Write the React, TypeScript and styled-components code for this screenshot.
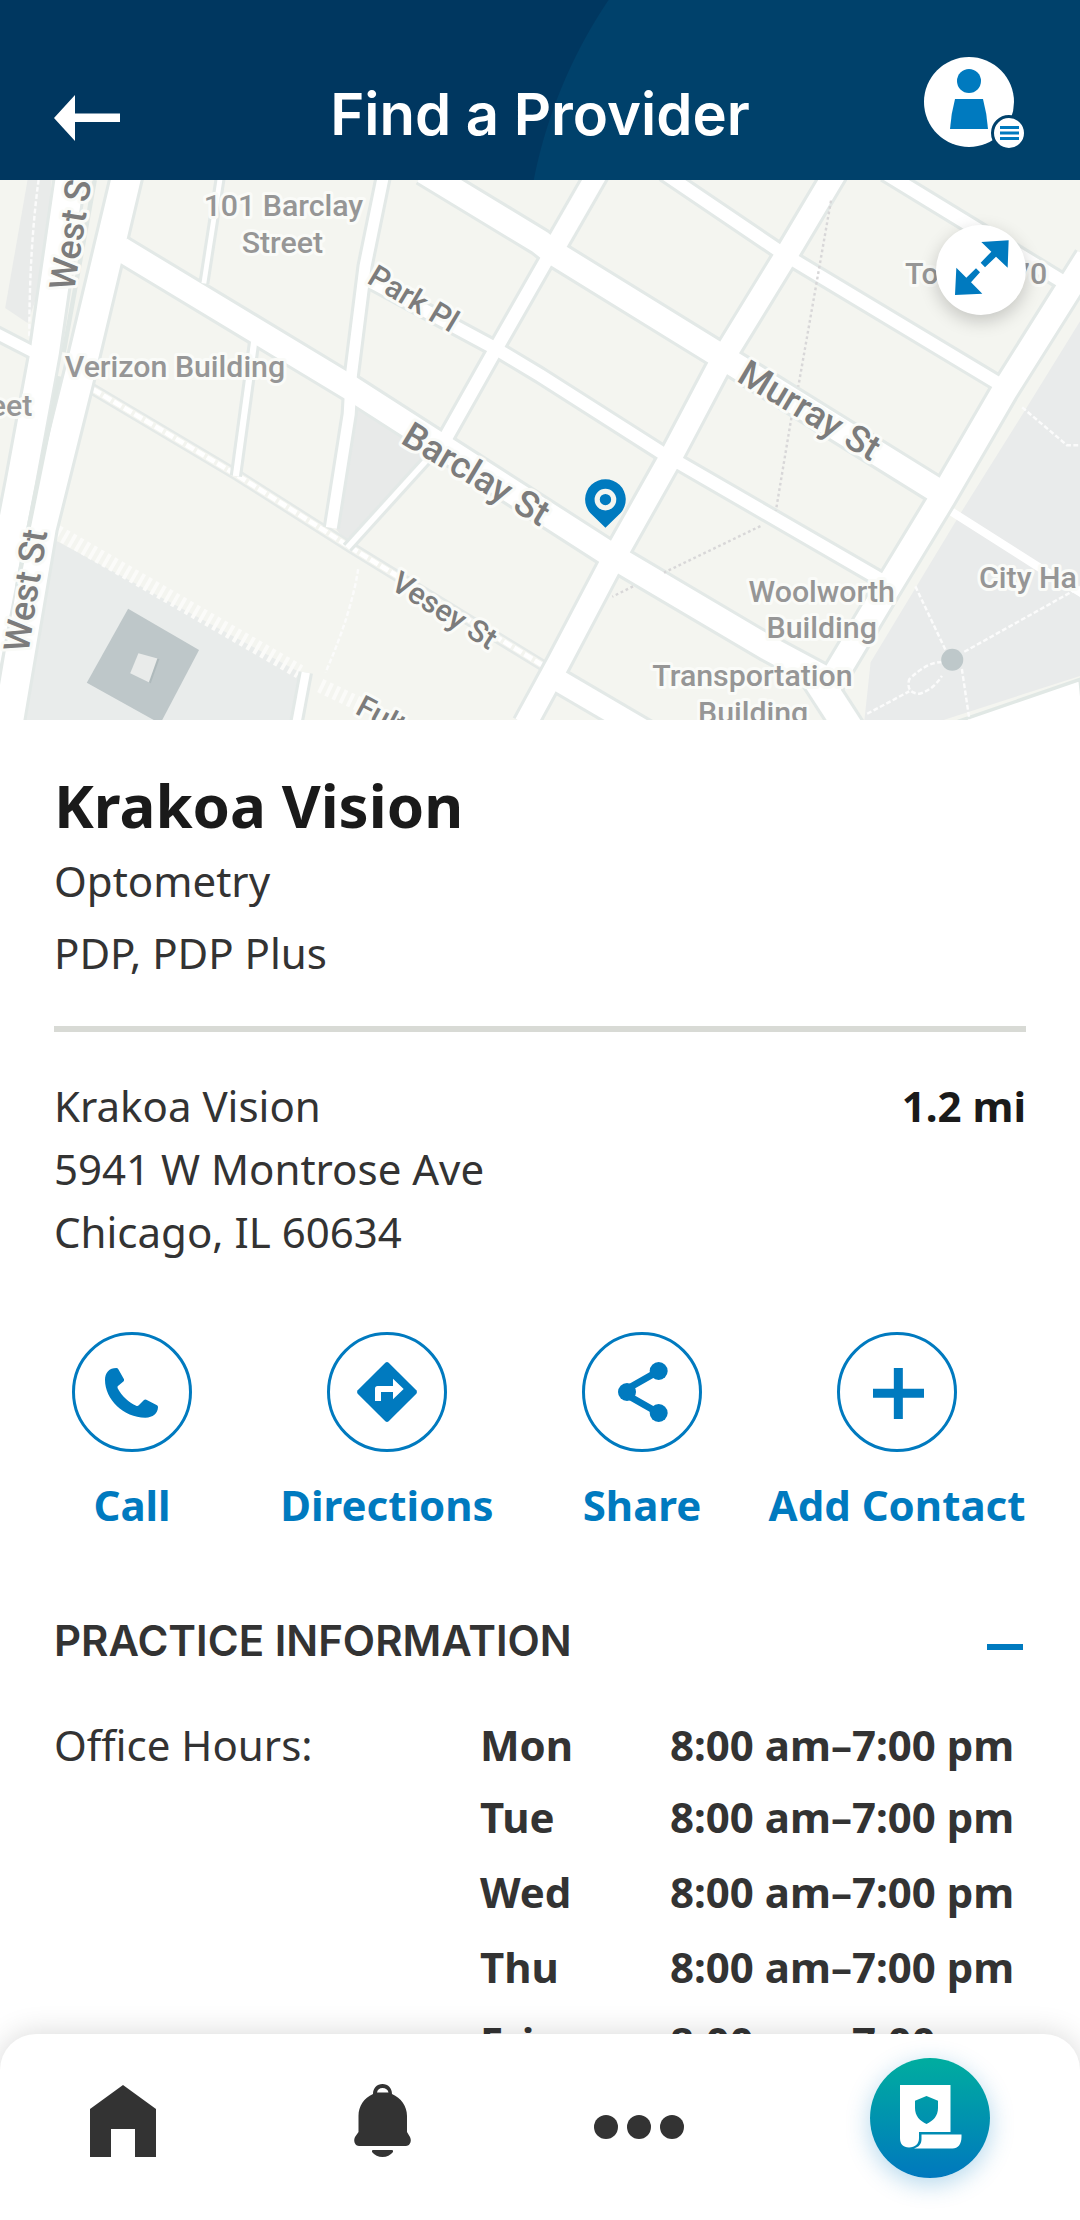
import React, { useState } from "react";
import styled, { createGlobalStyle, css } from "styled-components";

const blue = "#007abf";
const ink = "#333333";
const body = `"Noto Sans", "Open Sans", sans-serif`;
const display = `Inter, "Noto Sans", sans-serif`;

const GlobalStyle = createGlobalStyle`
  *, *::before, *::after { box-sizing: border-box; }
  body { margin: 0; background: #ffffff; color: ${ink}; font-family: ${body}; }
  button { margin: 0; padding: 0; border: 0; background: none; color: inherit; font: inherit; cursor: pointer; }
  svg { display: block; }
`;

const Screen = styled.div`
  display: flex;
  flex-direction: column;
  height: 100vh;
  overflow: hidden;
`;

const Header = styled.header`
  display: grid;
  grid-template-columns: 102px 1fr 102px;
  align-items: end;
  flex: none;
  height: 180px;
  padding: 0 54px 28px;
  color: #ffffff;
  background: radial-gradient(circle at 1016px 275px, #00416b 491px, #003760 492px);
`;

const BackButton = styled.button`
  justify-self: start;
  padding: 11px 0;
`;

const ScreenTitle = styled.h1`
  margin: 0;
  text-align: center;
  white-space: nowrap;
  font: 600 58px/76px ${display};
`;

const AccountButton = styled.button`
  justify-self: end;
`;

const Main = styled.main`
  flex: 1;
  min-height: 0;
  overflow-y: auto;
  scrollbar-width: none;
`;

const MapPanel = styled.section`
  position: relative;
  height: 540px;
  background: #f4f5f0;

  > svg { width: 100%; height: 100%; }
`;

const ExpandButton = styled.button`
  position: absolute;
  top: 45px;
  right: 54px;
  width: 90px;
  height: 90px;
  border-radius: 50%;
  background: #ffffff;
  box-shadow: 0 6px 18px rgba(0, 0, 0, 0.2);
`;

const Summary = styled.section`
  margin: 0 54px;
  padding: 45px 0 37px;
  border-bottom: 6px solid #d8dad5;
`;

const ProviderName = styled.h2`
  margin: 0;
  color: #1a1a1a;
  font-size: 60px;
  font-weight: 700;
  line-height: 80px;
`;

const Detail = styled.p`
  margin: 0;
  font-size: 42px;
  line-height: 72px;
`;

const Location = styled.section`
  display: flex;
  justify-content: space-between;
  align-items: flex-start;
  padding: 42px 54px 69px;
  font-size: 42px;
  line-height: 63px;
`;

const Address = styled.address`
  font-style: normal;
`;

const Distance = styled.strong`
  color: #1a1a1a;
  font-weight: 700;
`;

const Actions = styled.section`
  display: grid;
  grid-template-columns: repeat(4, minmax(0, 1fr));
  column-gap: 1px;
  padding: 0 56px 0 5px;
`;

const Action = styled.button`
  display: flex;
  flex-direction: column;
  align-items: center;
  gap: 21px;
  color: ${blue};
  font-size: 42px;
  font-weight: 700;
  line-height: 63px;
  white-space: nowrap;
`;

const ActionRing = styled.span`
  width: 120px;
  height: 120px;
  border: 3px solid ${blue};
  border-radius: 50%;
`;

const Practice = styled.section`
  padding: 75px 54px 0;
`;

const PracticeHead = styled.div`
  display: flex;
  justify-content: space-between;
  align-items: flex-end;
  margin-bottom: 39px;
`;

const PracticeTitle = styled.h3`
  margin: 0;
  font: 600 42px/60px ${display};
`;

const Toggle = styled.button`
  display: flex;
  align-items: center;
  justify-content: center;
  width: 42px;
  height: 48px;
`;

const Dash = styled.span`
  width: 36px;
  height: 6px;
  background: ${blue};
`;

const Hours = styled.div`
  display: grid;
  grid-template-columns: 426fr 546fr;
  font-size: 42px;
  line-height: 69px;
`;

const HoursLabel = styled.div``;

const HoursTable = styled.table`
  width: 100%;
  table-layout: fixed;
  border-collapse: collapse;
  font-weight: 700;

  th, td { padding: 0; text-align: left; white-space: nowrap; line-height: 75px; }
  th { width: 190px; }
  tr:first-child > * { line-height: 69px; }
`;

const TabBar = styled.nav`
  display: flex;
  justify-content: space-between;
  align-items: center;
  position: relative;
  flex: none;
  height: 186px;
  padding: 0 87px 12px 75px;
  border-radius: 36px 36px 0 0;
  background: #ffffff;
  box-shadow: 0 0 30px rgba(0, 0, 0, 0.16);
`;

const Tab = styled.button<{ $width: number; $raised?: boolean }>`
  display: flex;
  justify-content: center;
  width: ${(p) => p.$width}px;
  color: ${ink};
  ${(p) =>
    p.$raised &&
    css`
      margin-bottom: 6px;
    `}
`;

const CardDisc = styled.span`
  width: 120px;
  height: 120px;
  border-radius: 50%;
  background: linear-gradient(#00ad9f, #0078be);
  box-shadow: 0 6px 24px rgba(0, 122, 191, 0.3);
`;

type Street = { d: string; w: number };

const streets: Street[] = [
  { d: "M-20 440L100 502", w: 48 },
  { d: "M640 -10L592 300", w: 32 },
  { d: "M738 470L685 860", w: 36 },
  { d: "M1113 -10L1060 250L1020 570L1014 680L962 1010", w: 50 },
  { d: "M1260 790L1008 1068", w: 34 },
  { d: "M1050 280L1440 490L1568 567L1918 790L2600 1185", w: 54 },
  { d: "M1600 210L1440 490L1285 765", w: 56 },
  { d: "M1735 -20L1600 215", w: 76 },
  { d: "M1928 -20L2283 220L2918 602", w: 54 },
  { d: "M2570 -20L3110 310", w: 56 },
  { d: "M888 1430L860 1580", w: 42 },
  { d: "M1590 1435L1880 1605", w: 80 },
  { d: "M1230 -25L1568 180L1608 212L2083 505L2738 912", w: 88 },
  { d: "M350 200L1020 605L1788 1098L2228 1358L2400 1450", w: 88 },
  { d: "M2425 -20L2288 210L2098 520L1953 795L1773 1115L1623 1400L1525 1580", w: 82 },
  { d: "M3160 225L2918 610L2738 920L2568 1200L2400 1480", w: 90 },
  { d: "M2360 1430L2470 1600", w: 100 },
  { d: "M205 -20L130 500L60 880L-60 1500", w: 100 },
  { d: "M370 -20L232 560L120 1010L20 1600", w: 102 },
];

const footpaths = [
  "M2413 60L2318 600",
  "M2298 690L2253 960",
  "M2208 1005L1928 1140",
  "M1838 1180L1778 1210",
];

const parkPaths = [
  "M2968 660L3098 770H3140",
  "M2658 1180L2748 1370",
  "M2800 1370L3140 1180",
  "M2793 1420L2815 1568",
  "M2735 1400Q2690 1400 2640 1450Q2630 1490 2670 1492Q2710 1480 2735 1440",
  "M2518 1550L2640 1485",
  "M1040 1130Q1020 1260 945 1430",
  "M112 0Q85 200 85 460",
];

const MapPicture = () => (
  <svg viewBox="0 0 3136 1568" preserveAspectRatio="xMidYMid slice" role="img" aria-label="Map around the practice">
    <rect width="3136" height="1568" fill="#f4f5f0" />
    <path d="M80 0H150L130 270L80 415L15 372Z" fill="#e9ebea" />
    <path d="M150 1040L890 1440L850 1568H50Z" fill="#e9eceb" />
    <path d="M1036 665L1260 790L1016 1062L965 1000Z" fill="#e8eae9" />
    <path d="M3136 410L2988 650L2800 950L2528 1400L2510 1568H2740L3136 1440Z" fill="#e9ebeb" />
    <path d="M3136 1450L2770 1576L3150 1590Z" fill="#ffffff" stroke="#e1e8e5" strokeWidth="10" />
    <path d="M165 1022L870 1428M930 1468L1060 1530" fill="none" stroke="#fbfbf9" strokeWidth="42" strokeDasharray="11 12" />
    <path d="M372 1245L578 1365L470 1570L450 1570L252 1460Z" fill="#bec7c9" />
    <path d="M402 1374L460 1390L435 1460L378 1432Z" fill="#e9ebea" />
    <path d="M435 1460L460 1390" fill="none" stroke="#afbabc" strokeWidth="6" />
    <g fill="none" stroke="#fbfbfb" strokeWidth="7" strokeDasharray="14 7">
      {parkPaths.map((d) => <path key={d} d={d} />)}
    </g>
    <path d="M240 590L690 858L1020 1068L1580 1412" fill="none" stroke="#e4e9e7" strokeWidth="34" />
    <path d="M240 590L690 858L1020 1068L1580 1412" fill="none" stroke="#f4f5f0" strokeWidth="20" />
    <path d="M240 590L690 858L1020 1068L1580 1412" fill="none" stroke="#ffffff" strokeWidth="14" strokeDasharray="26 9" />
    <path d="M2758 960L3010 1120L3150 1205" fill="none" stroke="#ffffff" strokeWidth="24" />
    <g fill="none" stroke="#e3e9e7" strokeLinejoin="round">
      {streets.map((s) => <path key={s.d} d={s.d} strokeWidth={s.w} />)}
    </g>
    <g fill="none" stroke="#ffffff" strokeLinejoin="round">
      {streets.map((s) => <path key={s.d} d={s.d} strokeWidth={s.w - 18} />)}
    </g>
    <path d="M275 0L185 500M172 570L85 1000L50 1180" fill="none" stroke="#e1e8e5" strokeWidth="13" />
    <g fill="none" stroke="#d8d7d8" strokeWidth="7" strokeDasharray="8 8">
      {footpaths.map((d) => <path key={d} d={d} />)}
    </g>
    <circle cx="2765" cy="1393" r="32" fill="#bec8ca" />
    <g fontFamily="Roboto, 'Noto Sans', sans-serif" fontWeight="500" stroke="#fafbf8" strokeWidth="18" strokeLinejoin="round" style={{ paintOrder: "stroke" }}>
      <g fontSize="88" fill="#969696">
        <text x="823" y="105" textAnchor="middle">101 Barclay</text>
        <text x="820" y="212" textAnchor="middle">Street</text>
        <text x="188" y="573">Verizon Building</text>
        <text x="94" y="685" textAnchor="end">eet</text>
        <text x="2628" y="302">Tower 270</text>
        <text x="2386" y="1225" textAnchor="middle">Woolworth</text>
        <text x="2386" y="1331" textAnchor="middle">Building</text>
        <text x="2185" y="1470" textAnchor="middle">Transportation</text>
        <text x="2187" y="1577" textAnchor="middle">Building</text>
        <text x="2843" y="1184">City Ha</text>
      </g>
      <g fill="#7c7c7c">
        <text fontSize="90" transform="translate(1062 297) rotate(31)">Park Pl</text>
        <text fontSize="88" transform="translate(1130 1185) rotate(32)">Vesey St</text>
        <text fontSize="88" transform="translate(1028 1548) rotate(28)">Fulton St</text>
        <text fontSize="106" transform="translate(1160 762) rotate(31)">Barclay St</text>
        <text fontSize="106" transform="translate(2136 582) rotate(31)">Murray St</text>
        <text fontSize="104" transform="translate(215 324) rotate(-81)">West St</text>
        <text fontSize="104" transform="translate(82 1374) rotate(-81)">West St</text>
      </g>
    </g>
    <path d="M1758 1010L1714 967A59 59 0 1 1 1802 967Z" fill={blue} />
    <circle cx="1758" cy="928" r="24" fill={blue} stroke="#f4f5f0" strokeWidth="15" />
  </svg>
);

const BackIcon = () => (
  <svg width="66" height="46" viewBox="0 0 66 46" fill="currentColor" aria-hidden="true">
    <path d="M0 23L21 0V18.500H66V27H21V46Z" />
  </svg>
);

const AccountIcon = () => (
  <svg width="102" height="95" viewBox="0 0 102 95" aria-hidden="true">
    <circle cx="45" cy="45" r="45" fill="#ffffff" />
    <circle cx="45" cy="24" r="12" fill={blue} />
    <path d="M31 42H59Q63 57 64 72H26Q27 57 31 42Z" fill={blue} />
    <circle cx="85" cy="76" r="16.500" fill="#ffffff" stroke="#00416b" strokeWidth="3" />
    <path d="M76 70.500H95M76 76H95M76 81.500H95" stroke={blue} strokeWidth="3" />
  </svg>
);

const ExpandIcon = () => (
  <svg width="90" height="90" viewBox="168 585 270 270" fill={blue} aria-hidden="true">
    <path d="M386 631L304 636L334 665L302 698L315 712L348 680L383 713Z" />
    <path d="M229 713L259 743L288 715L300 727L273 757L307 791L225 795Z" />
  </svg>
);

const PhoneIcon = () => (
  <svg viewBox="45 45 342 342" fill={blue} aria-hidden="true">
    <path d="M169 144Q173 144 175 148L192 178Q193 181 191 184L173 199Q172 202 173 205C185 228 205 247 230 258Q234 259 237 255L252 240Q255 237 259 239L291 256Q294 258 294 262C293 281 279 293 256 293C190 293 135 237 135 180C135 158 148 144 169 144Z" />
  </svg>
);

const DirectionsIcon = () => (
  <svg viewBox="810 45 342 342" aria-hidden="true">
    <path d="M976 128Q981 124 986 128L1069 211Q1073 216 1069 221L986 304Q981 308 976 304L893 221Q889 216 893 211Z" fill={blue} />
    <path d="M945 243V206Q945 198 953 198H999V176L1031 207L999 238V216H963V243Z" fill="#ffffff" />
  </svg>
);

const ShareIcon = () => (
  <svg viewBox="75 45 342 342" fill={blue} aria-hidden="true">
    <path d="M296 153L201 207V225L296 279" fill="none" stroke={blue} strokeWidth="20" />
    <circle cx="296" cy="153" r="27" />
    <circle cx="201" cy="216" r="27" />
    <circle cx="296" cy="279" r="27" />
  </svg>
);

const PlusIcon = () => (
  <svg viewBox="840 45 342 342" aria-hidden="true">
    <path d="M1015 144V297M939 220H1092" stroke={blue} strokeWidth="27" />
  </svg>
);

const HomeIcon = () => (
  <svg width="66" height="72" viewBox="0 0 66 72" fill="currentColor" aria-hidden="true">
    <path d="M33 0L66 24V72H45V44H21V72H0V24Z" />
  </svg>
);

const BellIcon = () => (
  <svg width="57" height="74" viewBox="0 0 57 74" fill="currentColor" aria-hidden="true">
    <path fillRule="evenodd" d="M19 10C19 4 23 0 28.500 0S38 4 38 10C47 14 53 22 53 32V48L56 53C58 57 56 62 52 62H5C1 62 -1 57 1 53L4.500 48V32C4.500 22 10 14 19 10ZM23 8.500H34.500C34 5.500 31.500 4 28.500 4S23.500 5.500 23 8.500Z" />
    <path d="M19 66H38Q39.500 66 39 68Q35 73 28.500 73T18 68Q17.500 66 19 66Z" />
  </svg>
);

const MoreIcon = () => (
  <svg width="90" height="36" viewBox="0 0 90 36" fill="currentColor" aria-hidden="true">
    <circle cx="12" cy="24" r="12" />
    <circle cx="45" cy="24" r="12" />
    <circle cx="78" cy="24" r="12" />
  </svg>
);

const IdCardIcon = () => (
  <svg width="120" height="120" viewBox="0 0 120 120" fill="#ffffff" aria-hidden="true">
    <path fillRule="evenodd" d="M30 27H80.500V74H49V80C49 86 45 89.500 39 89.500S30 86 30 80ZM56.500 38L45 42.700V50C45 58 50 63 56.500 66C63 63 68 58 68 50V42.700Z" />
    <path d="M51.500 76.500H91.500V79C91.500 86 88 90.500 82.500 90.500H44C49 89 51.500 86 51.500 81Z" />
  </svg>
);

const actions = [
  { label: "Call", Icon: PhoneIcon },
  { label: "Directions", Icon: DirectionsIcon },
  { label: "Share", Icon: ShareIcon },
  { label: "Add Contact", Icon: PlusIcon },
];

const days = ["Mon", "Tue", "Wed", "Thu", "Fri"];

export default function App() {
  const [open, setOpen] = useState(true);

  return (
    <>
      <GlobalStyle />
      <Screen>
        <Header>
          <BackButton aria-label="Back"><BackIcon /></BackButton>
          <ScreenTitle>Find a Provider</ScreenTitle>
          <AccountButton aria-label="Account menu"><AccountIcon /></AccountButton>
        </Header>
        <Main>
          <MapPanel>
            <MapPicture />
            <ExpandButton aria-label="Expand map"><ExpandIcon /></ExpandButton>
          </MapPanel>
          <Summary>
            <ProviderName>Krakoa Vision</ProviderName>
            <Detail>Optometry</Detail>
            <Detail>PDP, PDP Plus</Detail>
          </Summary>
          <Location>
            <Address>
              Krakoa Vision<br />
              5941 W Montrose Ave<br />
              Chicago, IL 60634
            </Address>
            <Distance>1.2 mi</Distance>
          </Location>
          <Actions>
            {actions.map(({ label, Icon }) => (
              <Action key={label}>
                <ActionRing><Icon /></ActionRing>
                {label}
              </Action>
            ))}
          </Actions>
          <Practice>
            <PracticeHead>
              <PracticeTitle>PRACTICE INFORMATION</PracticeTitle>
              <Toggle aria-label="Toggle practice information" aria-expanded={open} onClick={() => setOpen(!open)}>
                <Dash />
              </Toggle>
            </PracticeHead>
            {open && (
              <Hours>
                <HoursLabel id="hours">Office Hours:</HoursLabel>
                <HoursTable aria-labelledby="hours">
                  <tbody>
                    {days.map((day) => (
                      <tr key={day}>
                        <th scope="row">{day}</th>
                        <td>8:00 am–7:00 pm</td>
                      </tr>
                    ))}
                  </tbody>
                </HoursTable>
              </Hours>
            )}
          </Practice>
        </Main>
        <TabBar aria-label="Main">
          <Tab $width={96} aria-label="Home"><HomeIcon /></Tab>
          <Tab $width={57} aria-label="Notifications"><BellIcon /></Tab>
          <Tab $width={90} aria-label="More"><MoreIcon /></Tab>
          <Tab $width={126} $raised aria-label="ID card"><CardDisc><IdCardIcon /></CardDisc></Tab>
        </TabBar>
      </Screen>
    </>
  );
}
